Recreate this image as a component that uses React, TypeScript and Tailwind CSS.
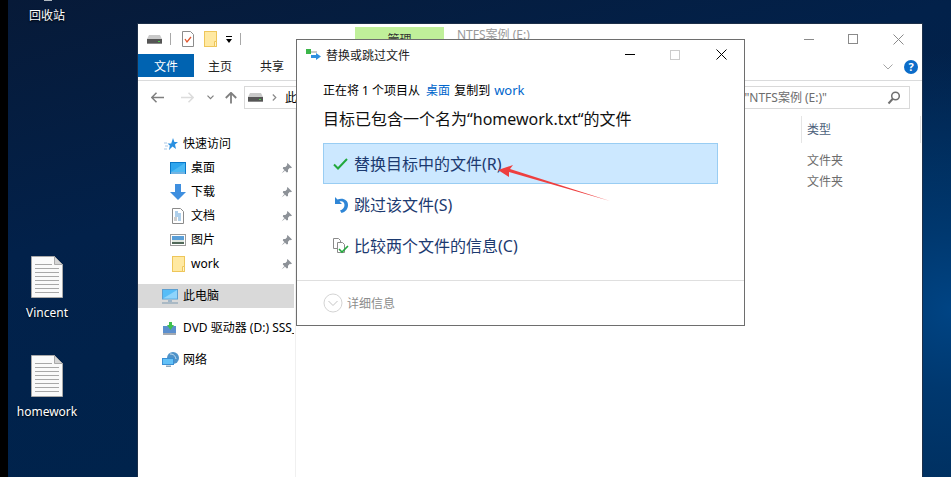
import React from "react";

const Drive = ({ className = "" }: { className?: string }) => (
  <svg width="15" height="9" viewBox="0 0 15 9" className={className}>
    <path d="M2 0h11l2 4v5H0V4z" fill="#c9c9c9" />
    <rect x="0" y="4" width="15" height="5" fill="#555" />
    <rect x="0" y="8" width="15" height="1" fill="#8a8a8a" />
    <rect x="11" y="6" width="2" height="1" fill="#4ad04a" />
  </svg>
);

const YellowFolder = () => (
  <svg width="13" height="16" viewBox="0 0 13 16">
    <rect x=".5" y=".5" width="12" height="15" fill="#ffe9a2" stroke="#eec65a" />
    <path d="M10.500 10.500h2v5h-2z" fill="#fff3c8" stroke="#eec65a" />
  </svg>
);

const Pin = () => (
  <svg width="11" height="11" viewBox="0 0 11 11">
    <path d="M6.500 0 11 4.500 9.700 5.200 8.900 4.800 7 6.800 7 9 5.800 9.400 1.800 5.400 2.300 4 4.400 4 6.300 2.100 5.900 1.200z" fill="#8d9298" />
    <path d="M3.400 7 .5 10.500 4 7.800z" fill="#8d9298" />
  </svg>
);

const DocFile = () => (
  <svg width="32" height="42" viewBox="0 0 32 42">
    <path d="M.5.500h23l8 8v33H.5z" fill="#fafafa" stroke="#a9a9a9" />
    <path d="M23.500.500v8h8z" fill="#d5d5d5" stroke="#a9a9a9" />
    {[8, 12, 16, 20, 24, 28, 32, 36].map((y, i) => (
      <rect key={y} x="4" y={y} width={i === 0 ? 17 : 24} height="1" fill="#a8a8a8" />
    ))}
  </svg>
);

const DesktopFile = ({ label, className }: { label: string; className: string }) => (
  <div className={`absolute flex w-[80px] flex-col items-center gap-[7px] ${className}`}>
    <DocFile />
    <span className="text-[12px] leading-[16px] text-white [text-shadow:0_1px_2px_#000]">{label}</span>
  </div>
);

const icons: Record<string, React.ReactNode> = {
  desk: (
    <svg width="16" height="12" viewBox="0 0 16 12">
      <rect width="16" height="12" fill="#0a78c8" />
      <path d="M1 1h14v9H1z" fill="#2fa6ee" />
      <path d="M1 10 15 1v9z" fill="#4db9f3" />
      <rect x="1" y="10.500" width="14" height="1" fill="#d8eefb" />
    </svg>
  ),
  down: (
    <svg width="16" height="16" viewBox="0 0 16 16">
      <path d="M5 0h6v8h5l-8 8-8-8h5z" fill="#3f8fdf" />
    </svg>
  ),
  doc: (
    <svg width="12" height="16" viewBox="0 0 12 16">
      <path d="M.5.500h8l3 3v12H.5z" fill="#fff" stroke="#8b8b8b" />
      <path d="M3 4h3M3 6h6M3 8h6M6 10h3M6 12h3" stroke="#5f9fd6" />
      <path d="M2 10h3M2 12h3" stroke="#9a9a9a" />
    </svg>
  ),
  pic: (
    <svg width="16" height="12" viewBox="0 0 16 12">
      <rect x=".5" y=".5" width="15" height="11" fill="#fff" stroke="#9c9c9c" />
      <rect x="2" y="2" width="12" height="4" fill="#5a9fd8" />
      <rect x="2" y="6" width="12" height="2" fill="#dfe6df" />
      <path d="M2 8h12v2H2z" fill="#51695a" />
    </svg>
  ),
  work: <YellowFolder />,
};

const QuickRow = ({ icon, label }: { icon: string; label: string }) => (
  <div className="flex h-6 items-center">
    <div className="flex w-[20px] justify-center">{icons[icon]}</div>
    <span className="ml-[3px] flex-1 text-black">{label}</span>
    <div className="mr-[3px]"><Pin /></div>
  </div>
);

const Sidebar = () => (
  <div className="relative w-[158px] shrink-0 border-r border-[#f0f0f0] pt-[23px] text-[12px] leading-[24px] text-black">
    <div className="flex h-6 items-center pl-[26px]">
      <svg width="14" height="13" viewBox="0 0 14 13">
        <path d="M9 0l1.400 4H14l-3 2.600L12 11 8.500 8.600 5 12l.8-4.500-2.300-2h3.700z" fill="#2a90e0" />
        <path d="M0 5h3M1 8h3M0 11h3" stroke="#a9c7e5" />
      </svg>
      <span className="ml-[5px]">快速访问</span>
    </div>
    <div className="pl-[30px]">
      <QuickRow icon="desk" label="桌面" />
      <QuickRow icon="down" label="下载" />
      <QuickRow icon="doc" label="文档" />
      <QuickRow icon="pic" label="图片" />
      <QuickRow icon="work" label="work" />
    </div>
    <div className="mt-2 mr-px flex h-6 items-center bg-[#d9d9d9] pl-[24px]">
      <svg width="16" height="15" viewBox="0 0 16 15">
        <rect width="16" height="10.500" fill="#5d9fd0" />
        <rect x="1" y="1" width="14" height="8.500" fill="#57bdf7" />
        <path d="M1 9.500 15 1v8.500z" fill="#8fd4fb" />
        <rect x="6" y="11" width="4" height="2" fill="#9fb6c9" />
        <rect y="13.500" width="16" height="1" fill="#7d9ab0" />
      </svg>
      <span className="ml-[5px]">此电脑</span>
    </div>
    <div className="mt-2 mr-px flex h-6 items-center overflow-hidden whitespace-nowrap pl-[25px]">
      <svg width="13" height="13" className="shrink-0" viewBox="0 0 13 13">
        <rect y="4" width="13" height="9" fill="#5b8fce" />
        <rect y="11" width="13" height="2" fill="#a4a9b0" />
        <path d="M6 0h3v3h2l-3.500 5L4 3h2z" fill="#3fc04f" />
      </svg>
      <span className="ml-[7px]">DVD 驱动器 (D:) SSS_X64FRE</span>
    </div>
    <div className="mt-2 flex h-6 items-center pl-[24px]">
      <svg width="17" height="16" viewBox="0 0 17 16">
        <circle cx="11" cy="6" r="6" fill="#4f93c9" />
        <path d="M8 2c3 0 5 1 6 5" stroke="#c7e0f2" fill="none" />
        <rect y="6" width="12" height="7" fill="#3a8fd4" />
        <rect x="1" y="7" width="10" height="5" fill="#63c1f7" />
        <rect x="4" y="13.500" width="5" height="1.500" fill="#8fa7ba" />
      </svg>
      <span className="ml-[4px]">网络</span>
    </div>
  </div>
);

const Explorer = () => (
  <div className="absolute top-[24px] left-[138px] flex h-[453px] w-[784px] flex-col bg-white shadow-[0_0_0_1px_#1c2f49]">
    {/* Quick access + caption */}
    <div className="relative flex h-[30px] items-center pl-[9px]">
      <Drive />
      <div className="mx-[8px] h-[12px] w-px bg-[#a8a8a8]" />
      <svg width="12" height="16" viewBox="0 0 12 16" className="ml-[3px]">
        <path d="M.5.500h8l3 3v12H.5z" fill="#fff" stroke="#8c8c8c" />
        <path d="M3 8l2 3 4-5" stroke="#e0532a" strokeWidth="1.300" fill="none" />
      </svg>
      <div className="ml-[10px]"><YellowFolder /></div>
      <div className="ml-[9px] flex flex-col items-center gap-[2px]">
        <div className="h-px w-[6px] bg-black" />
        <div className="h-0 w-0 border-x-[3px] border-t-[4px] border-x-transparent border-t-black" />
      </div>
      <div className="ml-[8px] h-[12px] w-px bg-[#a8a8a8]" />
      <div className="absolute top-[3px] left-[217px] flex h-[27px] w-[89px] justify-center bg-[#c0f09a] pt-[4px] text-[12px] text-[#333]">管理</div>
      <span className="absolute top-[2px] left-[319px] text-[12px] text-[#999]">NTFS案例 (E:)</span>
      <div className="ml-auto flex items-center">
        <div className="flex w-[45px] justify-center">
          <div className="h-px w-[10px] bg-[#8a8a8a]" />
        </div>
        <div className="flex w-[45px] justify-center pr-[2px]">
          <div className="h-[10px] w-[10px] border border-[#8a8a8a]" />
        </div>
        <div className="flex w-[46px] justify-center pr-px">
          <svg width="11" height="11" viewBox="0 0 11 11"><path d="M.5.500l10 10M10.500.500l-10 10" stroke="#8a8a8a" /></svg>
        </div>
      </div>
    </div>
    {/* Tabs */}
    <div className="flex h-[27px] items-start border-b border-[#dadbdc] text-[12px]">
      <div className="flex h-[23px] w-[56px] items-center justify-center bg-[#0063b1] pt-[2px] text-white">文件</div>
      <div className="flex h-[23px] w-[52px] items-center justify-center pt-[2px] text-[#222]">主页</div>
      <div className="flex h-[23px] w-[52px] items-center justify-center pt-[2px] text-[#222]">共享</div>
      <div className="mr-[4px] ml-auto flex h-[26px] items-center gap-[11px] pb-[1px]">
        <svg width="10" height="6" viewBox="0 0 10 6"><path d="M.5.500 5 5 9.500.5" stroke="#a5a5a5" fill="none" /></svg>
        <div className="flex h-[14px] w-[14px] items-center justify-center rounded-full bg-[#0b6cc9] text-[11px] leading-none font-bold text-white">?</div>
      </div>
    </div>
    {/* Address */}
    <div className="mt-[5px] flex h-[23px] items-center pl-[13px] text-[12px]">
      <svg width="13" height="11" viewBox="0 0 13 11"><path d="M5.500.7.800 5.500l4.700 4.800M1 5.500h12" stroke="#7f7f7f" strokeWidth="1.500" fill="none" /></svg>
      <svg width="13" height="11" viewBox="0 0 13 11" className="ml-[17px]"><path d="M7.500.7l4.700 4.800-4.700 4.800M12 5.500H0" stroke="#dcdcdc" strokeWidth="1.500" fill="none" /></svg>
      <svg width="7" height="5" viewBox="0 0 7 5" className="ml-[13px]"><path d="M.5.700l3 3 3-3" stroke="#7f7f7f" strokeWidth="1.200" fill="none" /></svg>
      <svg width="12" height="12" viewBox="0 0 12 12" className="ml-[11px]"><path d="M6 11.500V1M.8 6 6 .8 11.200 6" stroke="#7f7f7f" strokeWidth="1.800" fill="none" /></svg>
      <div className="mr-[12px] ml-[7px] flex h-[23px] flex-1 items-center border border-[#d9d9d9] pl-[3px]">
        <Drive />
        <svg width="5" height="7" viewBox="0 0 5 7" className="ml-[9px]"><path d="M.8.500l3 3-3 3" stroke="#8a8a8a" strokeWidth="1.200" fill="none" /></svg>
        <span className="ml-[8px] text-black">此电脑</span>
        <span className="ml-auto text-[#6d6d6d]">"NTFS案例 (E:)"</span>
        <svg width="14" height="14" viewBox="0 0 14 14" className="mr-[8px] ml-[60px]"><circle cx="8.500" cy="5" r="3.800" fill="none" stroke="#6f6f6f" strokeWidth="1.500" /><path d="M5.800 7.800 1.500 12.500" stroke="#6f6f6f" strokeWidth="2" /></svg>
      </div>
    </div>
    {/* Body */}
    <div className="flex flex-1">
      <Sidebar />
      <div className="flex flex-1 flex-col items-end pt-[7px] pr-px text-[12px]">
        <div className="flex h-[27px] w-[120px] items-center border-x border-[#e5e5e5] pl-[5px] text-[#4c607a]">类型</div>
        <div className="w-[120px] pt-[7px] pl-[6px] leading-[21px] text-[#6d6d6d]">
          <div>文件夹</div>
          <div>文件夹</div>
        </div>
      </div>
    </div>
  </div>
);

const OptionRow = ({ icon, label, active }: { icon: React.ReactNode; label: string; active?: boolean }) => (
  <div className={`flex h-[41px] items-center border pl-[6px] text-[16px] text-[#1c3a70] ${active ? "border-[#99cdf3] bg-[#cce8ff]" : "border-transparent"}`}>
    <div className="flex w-[21px] justify-center">{icon}</div>
    <span className="ml-[3px]">{label}</span>
  </div>
);

const Dialog = () => (
  <div className="absolute top-[39px] left-[296px] flex h-[287px] w-[449px] flex-col border border-[#6e6e6e] bg-white text-black">
    <div className="flex h-[29px] items-center pl-[9px] text-[12px]">
      <svg width="15" height="12" viewBox="0 0 15 12">
        <rect y="0" width="5" height="5" fill="#3cb64a" />
        <rect x="5" y="2" width="6" height="2" fill="#c9c9c9" />
        <path d="M5 6h5V4l5 3.500-5 3.500V9H5z" fill="#2f8fe0" />
      </svg>
      <span className="ml-[5px] pt-[2px] text-[#222]">替换或跳过文件</span>
      <div className="ml-auto flex items-center">
        <div className="flex w-[46px] justify-center"><div className="h-px w-[10px] bg-black" /></div>
        <div className="flex w-[45px] justify-center pr-[2px]"><div className="h-[10px] w-[10px] border border-[#cccccc]" /></div>
        <div className="flex w-[46px] justify-center"><svg width="11" height="11" viewBox="0 0 11 11"><path d="M.5.500l10 10M10.500.500l-10 10" stroke="#000" /></svg></div>
      </div>
    </div>
    <div className="mt-[13px] flex h-[18px] items-center pl-[26px] text-[12px] whitespace-pre">
      正在将 1 个项目从<span className="ml-[6px] text-[#0066cc]">桌面</span><span className="ml-[4px]">复制到</span><span className="ml-[4px] text-[13px] text-[#0066cc]">work</span>
    </div>
    <div className="mt-[7px] flex h-[24px] items-center pl-[26px] text-[16px] text-[#111]">目标已包含一个名为“homework.txt“的文件</div>
    <div className="mt-[12px] flex flex-col pr-[26px] pl-[26px]">
      <OptionRow active label="替换目标中的文件(R)" icon={
        <svg width="15" height="12" viewBox="0 0 15 12"><path d="M1 6.500 5 10.500 14 1" stroke="#22a83c" strokeWidth="2" fill="none" /></svg>
      } />
      <OptionRow label="跳过该文件(S)" icon={
        <svg width="14" height="16" viewBox="0 0 14 16"><path d="M1 0v7h7L5.500 4.500C8 3.500 10.500 5 10.500 8S8.500 12.500 6 13.500L7.500 16C11.500 15 14 12 14 8 14 3 9 .5 3.500 2.500z" fill="#2f86d6" /></svg>
      } />
      <OptionRow label="比较两个文件的信息(C)" icon={
        <svg width="16" height="16" viewBox="0 0 16 16"><path d="M.5.500h5l2 2v8H.5z" fill="#fff" stroke="#8a8a8a" /><path d="M4.500 4.500h5l2 2v8h-7z" fill="#fff" stroke="#8a8a8a" /><path d="M6 11l3 3 6-6" stroke="#22a83c" strokeWidth="1.600" fill="none" /></svg>
      } />
    </div>
    <div className="mt-auto flex h-[45px] items-center border-t border-[#dfdfdf] pl-[26px] text-[12px] text-[#8c8c8c]">
      <svg width="20" height="20" viewBox="0 0 20 20"><circle cx="10" cy="10" r="9" fill="none" stroke="#d4d4d4" /><path d="M5.500 8l4.500 4.500L14.500 8" fill="none" stroke="#c4c4c4" /></svg>
      <span className="ml-[4px] pt-[2px]">详细信息</span>
    </div>
  </div>
);

export default function App() {
  return (
    <div className="relative h-[477px] w-[951px] overflow-hidden bg-black font-['Noto_Sans','Noto_Sans_CJK_SC',sans-serif]">
      <div className="absolute inset-y-0 right-0 left-[8px] bg-[radial-gradient(circle_at_100%_65%,#004484_0%,#00386f_8%,transparent_26%),linear-gradient(165deg,#071a38_0%,#02214a_35%,#00234c_70%,#002a55_100%)]" />
      <div className="absolute top-0 left-[44px] h-px w-[8px] bg-[#b0b8c0]" />
      <div className="absolute top-0 left-[29px] pt-px text-[12px] leading-[30px] text-white [text-shadow:0_1px_2px_#000]">回收站</div>
      <DesktopFile label="Vincent" className="top-[256px] left-[7px]" />
      <DesktopFile label="homework" className="top-[355px] left-[7px]" />
      <Explorer />
      <Dialog />
      <svg width="951" height="477" className="pointer-events-none absolute top-0 left-0">
        <path d="M610 201 510 169 513 165 498 170 509 177 509 172z" fill="#ee3f3f" />
      </svg>
    </div>
  );
}
